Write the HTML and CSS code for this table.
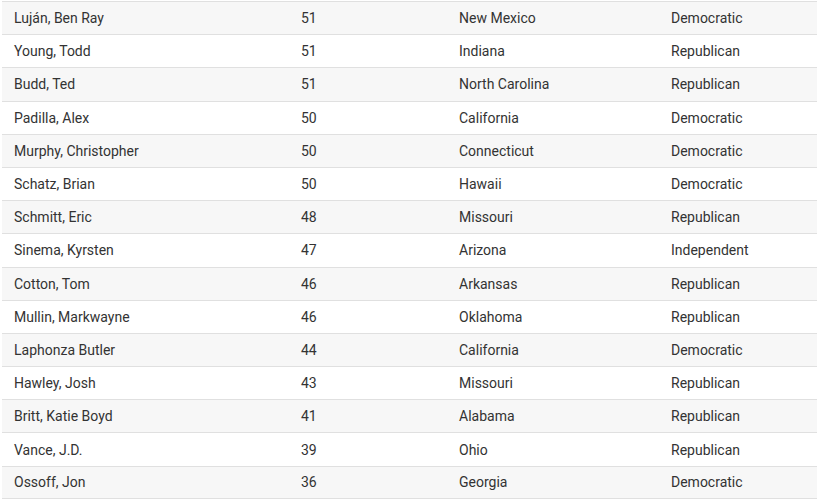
FILE: index.html
```html
<!DOCTYPE html>
<html>
<head>
<meta charset="utf-8">
<link rel="stylesheet" href="styles.css">
</head>
<body>
<div class="table">
  <div class="row"><div class="c">Luján, Ben Ray</div><div class="c">51</div><div class="c">New Mexico</div><div class="c">Democratic</div></div>
  <div class="row"><div class="c">Young, Todd</div><div class="c">51</div><div class="c">Indiana</div><div class="c">Republican</div></div>
  <div class="row"><div class="c">Budd, Ted</div><div class="c">51</div><div class="c">North Carolina</div><div class="c">Republican</div></div>
  <div class="row"><div class="c">Padilla, Alex</div><div class="c">50</div><div class="c">California</div><div class="c">Democratic</div></div>
  <div class="row"><div class="c">Murphy, Christopher</div><div class="c">50</div><div class="c">Connecticut</div><div class="c">Democratic</div></div>
  <div class="row"><div class="c">Schatz, Brian</div><div class="c">50</div><div class="c">Hawaii</div><div class="c">Democratic</div></div>
  <div class="row"><div class="c">Schmitt, Eric</div><div class="c">48</div><div class="c">Missouri</div><div class="c">Republican</div></div>
  <div class="row"><div class="c">Sinema, Kyrsten</div><div class="c">47</div><div class="c">Arizona</div><div class="c">Independent</div></div>
  <div class="row"><div class="c">Cotton, Tom</div><div class="c">46</div><div class="c">Arkansas</div><div class="c">Republican</div></div>
  <div class="row"><div class="c">Mullin, Markwayne</div><div class="c">46</div><div class="c">Oklahoma</div><div class="c">Republican</div></div>
  <div class="row"><div class="c">Laphonza Butler</div><div class="c">44</div><div class="c">California</div><div class="c">Democratic</div></div>
  <div class="row"><div class="c">Hawley, Josh</div><div class="c">43</div><div class="c">Missouri</div><div class="c">Republican</div></div>
  <div class="row"><div class="c">Britt, Katie Boyd</div><div class="c">41</div><div class="c">Alabama</div><div class="c">Republican</div></div>
  <div class="row"><div class="c">Vance, J.D.</div><div class="c">39</div><div class="c">Ohio</div><div class="c">Republican</div></div>
  <div class="row"><div class="c">Ossoff, Jon</div><div class="c">36</div><div class="c">Georgia</div><div class="c">Democratic</div></div>
</div>
</body>
</html>
```

FILE: styles.css
```css
html, body {
  margin: 0;
  padding: 0;
  background: #ffffff;
}
body {
  font-family: Roboto, "Liberation Sans", sans-serif;
  font-size: 14px;
  color: #333333;
}
.table {
  margin: 1px 3px 0 2px;
  display: flex;
  flex-direction: column;
}
.row {
  display: grid;
  grid-template-columns: 287px 158px 212px 158px;
  height: 33.2px;
  box-sizing: border-box;
  border-top: 1px solid #e0e0e0;
  align-items: center;
}
.row:last-child {
  border-bottom: 1px solid #e0e0e0;
}
.row:nth-child(odd) {
  background: #f7f7f7;
}
.c {
  padding: 0 12px;
  white-space: nowrap;
}
```
